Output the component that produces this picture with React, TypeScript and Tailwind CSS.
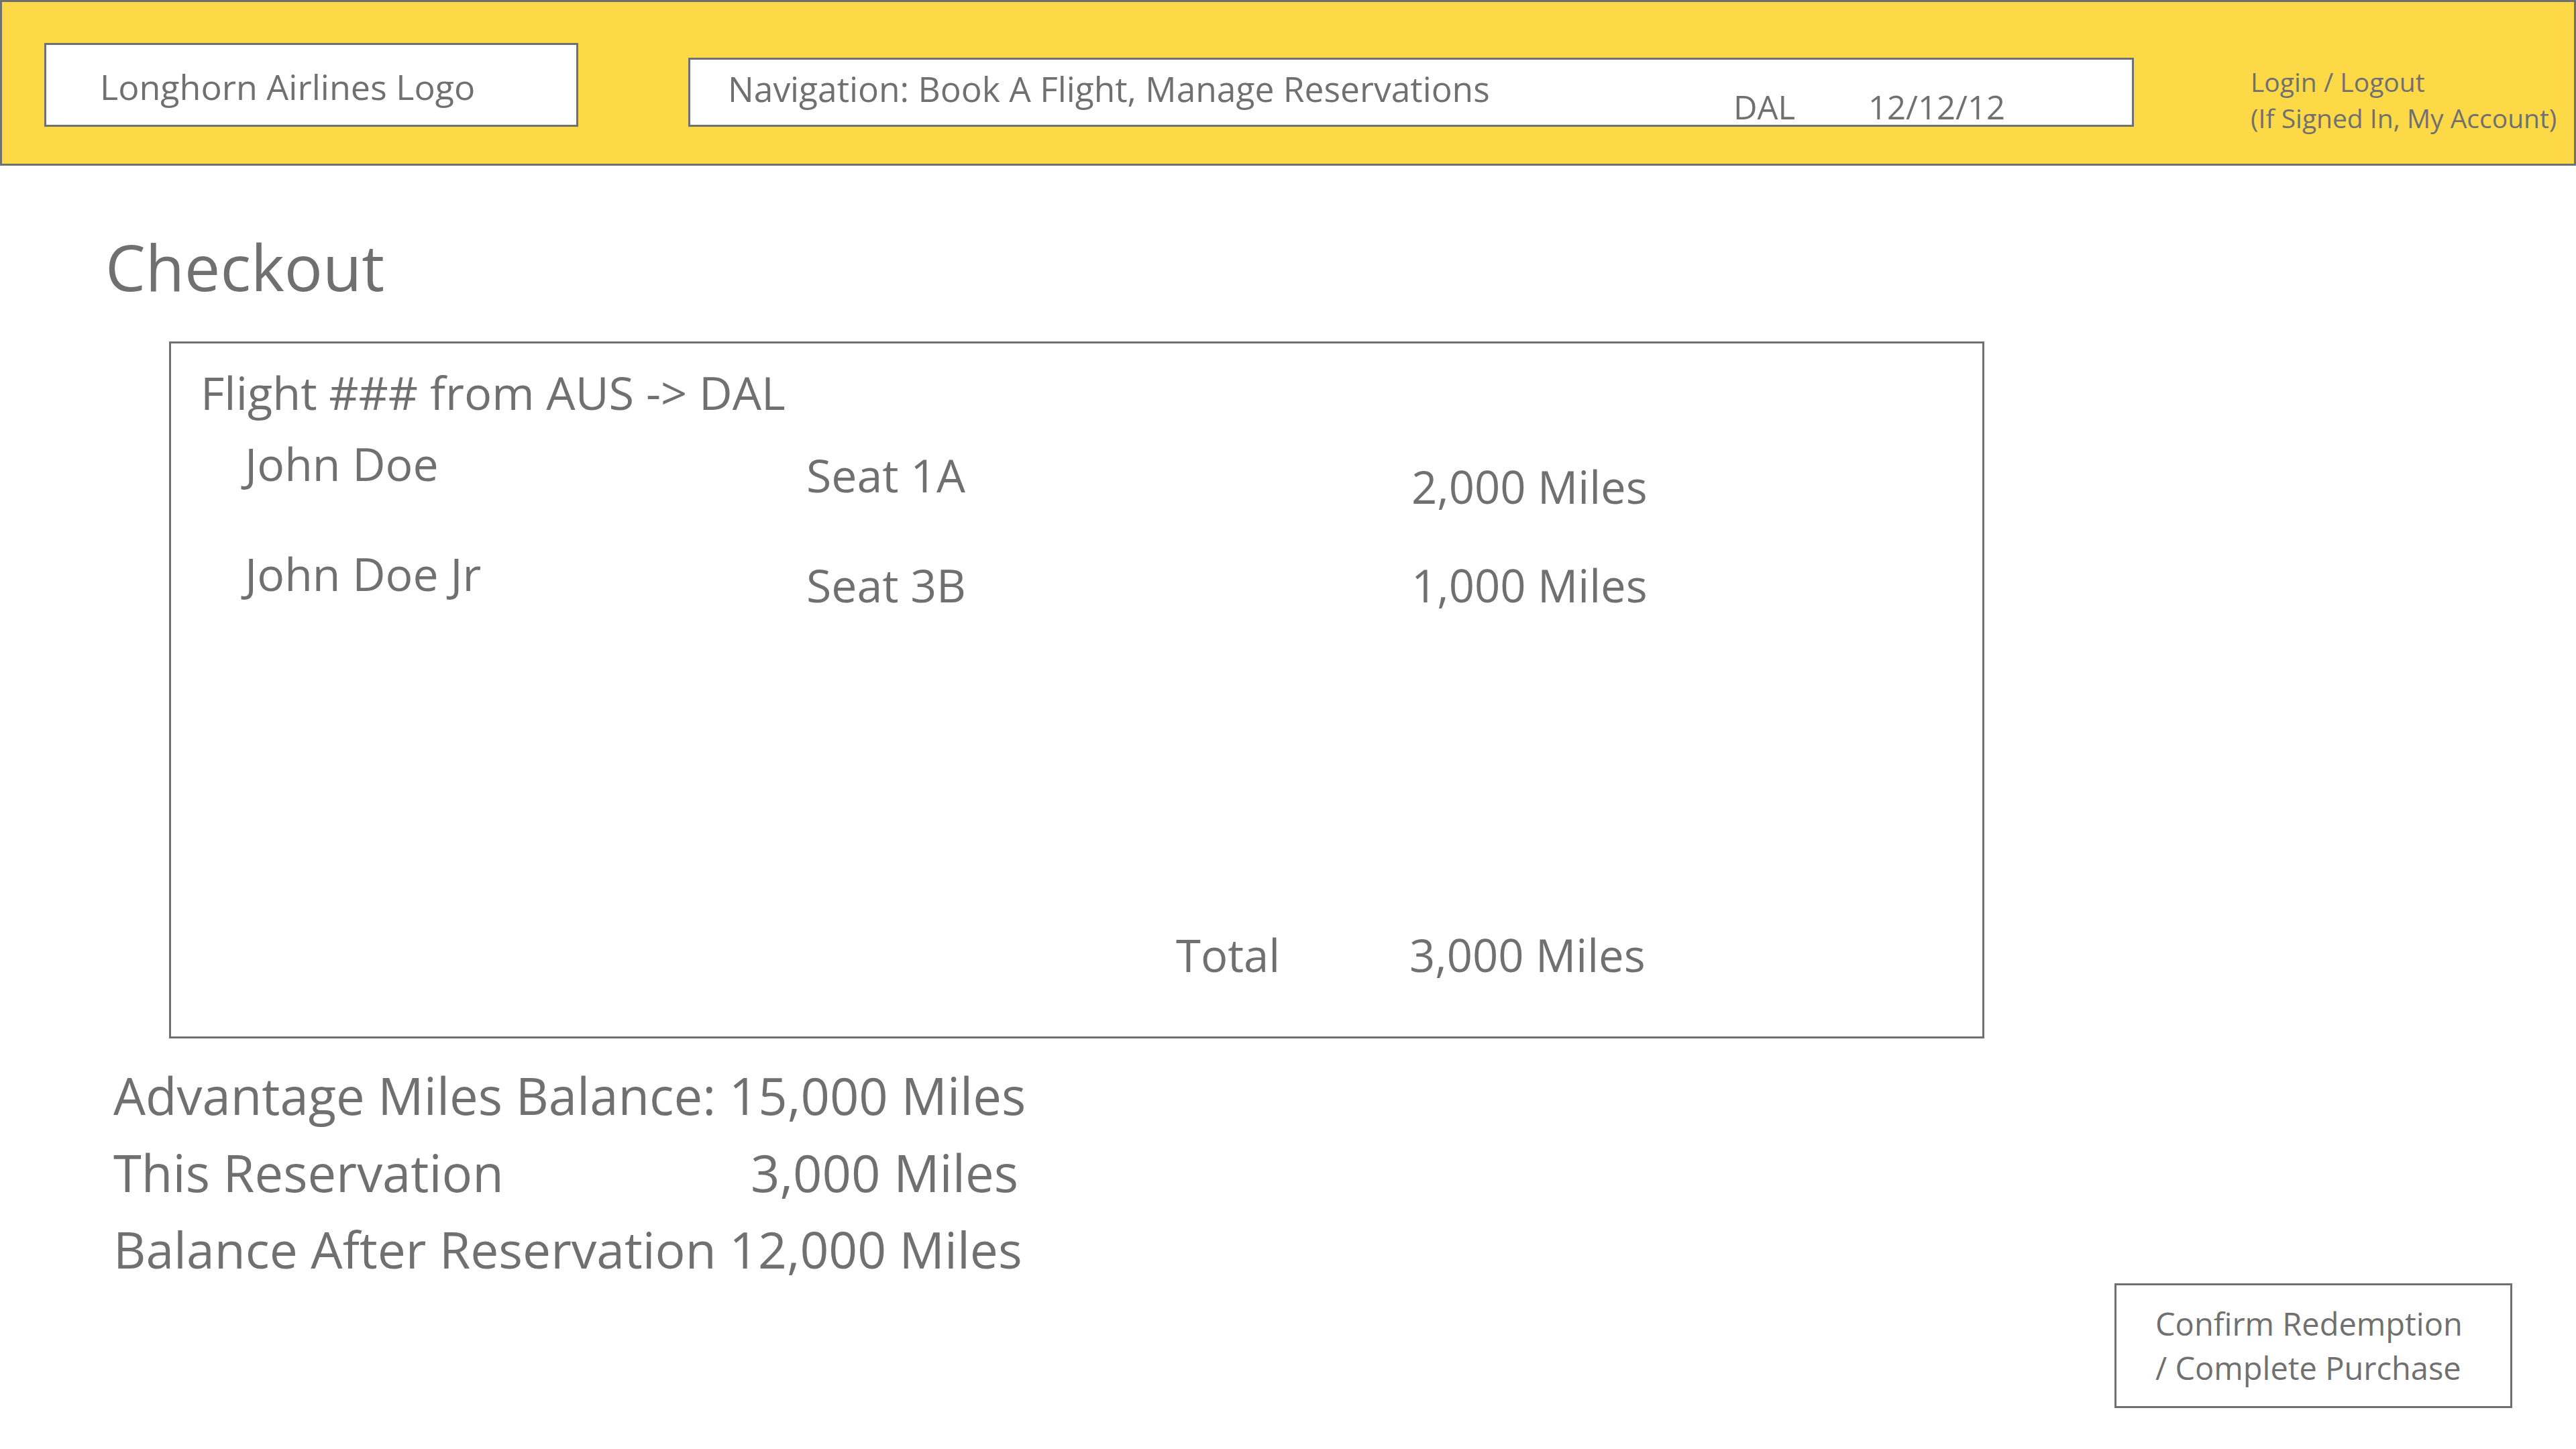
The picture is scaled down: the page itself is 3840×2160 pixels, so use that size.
export default function App() {
  return (
    <div className="w-[3840px] h-[2160px] bg-white text-[#707070] font-['Open_Sans',sans-serif] overflow-hidden">
      {/* Header */}
      <div className="h-[247px] bg-[#fdd947] border-[3px] border-[#707070] flex items-end pb-[55px] pl-[63px]">
        <div className="w-[796px] h-[125px] border-[3px] border-[#707070] bg-white flex items-center pl-[80px] pt-[4px] text-[52px] leading-[60px]">
          Longhorn Airlines Logo
        </div>
        <div className="ml-[164px] w-[2155px] h-[103px] border-[3px] border-[#707070] bg-white flex items-start pl-[56px] text-[49px] leading-[60px]">
          <span className="mt-[13px] w-[1499px] text-[51.5px]">Navigation: Book A Flight, Manage Reservations</span>
          <span className="mt-[40px] w-[201px]">DAL</span>
          <span className="mt-[40px]">12/12/12</span>
        </div>
        <div className="self-start mt-[92px] ml-[174px] text-[39px] leading-[54px]">
          <div>Login / Logout</div>
          <div>(If Signed In, My Account)</div>
        </div>
      </div>

      {/* Content */}
      <div className="pl-[157px] mt-[90px] text-[95px] leading-[120px]">Checkout</div>

      <div className="ml-[252px] mt-[52px] w-[2706px] h-[1039px] border-[3px] border-[#707070] flex flex-col pt-[33px] pb-[82px]">
        <div className="pl-[44px] text-[68.5px] leading-[80px]">Flight ### from AUS -&gt; DAL</div>
        {[
          { name: 'John Doe', seat: 'Seat 1A', miles: '2,000 Miles', mt: 'mt-[26px]', seatMt: 'mt-[17px]', milesMt: 'mt-[34px]' },
          { name: 'John Doe Jr', seat: 'Seat 3B', miles: '1,000 Miles', mt: 'mt-[50px]', seatMt: 'mt-[17px]', milesMt: 'mt-[17px]' },
        ].map((row) => (
          <div key={row.name} className={`flex items-start pl-[110px] text-[68px] leading-[80px] ${row.mt}`}>
            <span className="w-[837px]">{row.name}</span>
            <span className={`w-[902px] ${row.seatMt}`}>{row.seat}</span>
            <span className={`text-[67px] ${row.milesMt}`}>{row.miles}</span>
          </div>
        ))}
        <div className="mt-auto flex pl-[1498px] text-[67px] leading-[80px]">
          <span className="w-[348px]">Total</span>
          <span>3,000 Miles</span>
        </div>
      </div>

      <div className="flex items-start mt-[27px]">
        <div className="pl-[169px] text-[76px] leading-[115px]">
          <div>Advantage Miles Balance: 15,000 Miles</div>
          <div className="flex">
            <span className="w-[950px]">This Reservation</span>
            <span>3,000 Miles</span>
          </div>
          <div className="text-[75px]">Balance After Reservation 12,000 Miles</div>
        </div>
        <div className="ml-auto mr-[95px] mt-[338px] w-[593px] h-[186px] border-[3px] border-[#707070] flex flex-col justify-center pl-[58px] text-[47px] leading-[66px]">
          <span>Confirm Redemption</span>
          <span>/ Complete Purchase</span>
        </div>
      </div>
    </div>
  );
}
